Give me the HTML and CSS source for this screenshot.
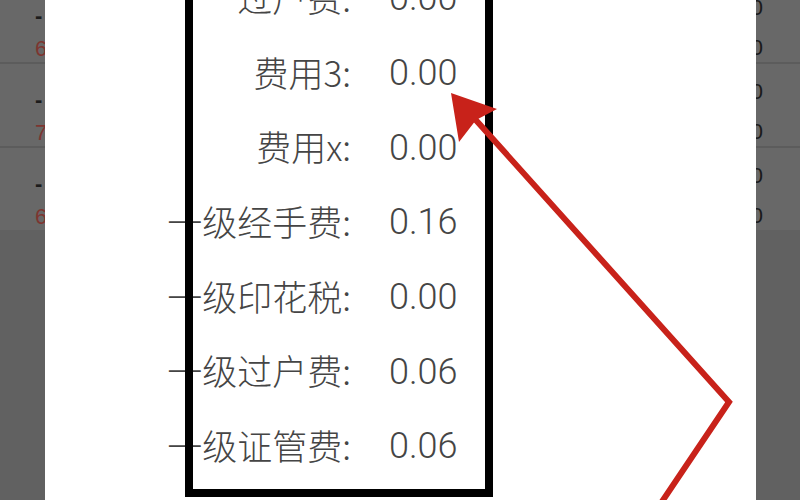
FILE: index.html
```html
<!doctype html>
<html lang="zh-CN">
    <head>
        <meta charset="UTF-8" />
        <meta name="viewport" content="width=device-width, initial-scale=1.0" />
        <title>费用明细</title>
        <link rel="stylesheet" href="styles.css">
    </head>
    <body>
        <!-- list behind the dialog, dimmed -->
        <div class="list">
            <div class="list-row">
                <div class="cell-left">
                    <span class="dash">-</span>
                    <span class="price">63.28</span>
                </div>
                <div class="cell-right">
                    <span>0.00</span>
                    <span>0.00</span>
                </div>
            </div>
            <div class="list-row">
                <div class="cell-left">
                    <span class="dash">-</span>
                    <span class="price">71.05</span>
                </div>
                <div class="cell-right">
                    <span>0.00</span>
                    <span>0.00</span>
                </div>
            </div>
            <div class="list-row">
                <div class="cell-left">
                    <span class="dash">-</span>
                    <span class="price">62.90</span>
                </div>
                <div class="cell-right">
                    <span>0.00</span>
                    <span>0.00</span>
                </div>
            </div>
        </div>

        <div class="dialog">
            <div class="fees">
                <div class="fee-label">过户费:</div>
                <div class="fee-value">0.00</div>
                <div class="fee-label">费用3:</div>
                <div class="fee-value">0.00</div>
                <div class="fee-label">费用x:</div>
                <div class="fee-value">0.00</div>
                <div class="fee-label">一级经手费:</div>
                <div class="fee-value">0.16</div>
                <div class="fee-label">一级印花税:</div>
                <div class="fee-value">0.00</div>
                <div class="fee-label">一级过户费:</div>
                <div class="fee-value">0.06</div>
                <div class="fee-label">一级证管费:</div>
                <div class="fee-value">0.06</div>
            </div>
            <div class="frame"></div>
        </div>

        <svg class="arrow" width="800" height="500" viewBox="0 0 800 500">
            <polyline points="474,118 729,402 655,512" fill="none" stroke="#c8221a" stroke-width="6" stroke-linejoin="miter" />
            <polygon points="451,93 497,109 476,120 459,142" fill="#c8221a" />
        </svg>
    </body>
</html>
```

FILE: styles.css
```css
body {
    margin: 0;
    width: 800px;
    height: 500px;
    position: relative;
    overflow: hidden;
    background-color: #616161;
    font-family: "Noto Sans CJK SC", sans-serif;
}
.list {
    margin-top: -20px;
    background-color: #686868;
}
.list-row {
    height: 82px;
    border-bottom: 2px solid #5c5c5c;
    display: flex;
    justify-content: space-between;
}
.list-row:last-child {
    border-bottom: none;
}
.cell-left,
.cell-right {
    display: flex;
    flex-direction: column;
    font-family: "Liberation Sans", sans-serif;
    font-size: 22px;
}
.cell-left {
    padding: 24px 0 0 35px;
    gap: 8px;
}
.cell-left .dash {
    color: #1c1c1c;
    font-weight: bold;
    line-height: 24px;
}
.cell-left .price {
    color: #7e3530;
    line-height: 26px;
}
.cell-right {
    padding: 16px 37px 0 0;
    gap: 16px;
    color: #1a1a1a;
    line-height: 24px;
    text-align: right;
}
.dialog {
    position: absolute;
    top: 0;
    bottom: 0;
    left: 45px;
    width: 711px;
    background-color: #ffffff;
}
.fees {
    margin-top: -41px;
    display: grid;
    grid-template-columns: 306px 1fr;
    grid-auto-rows: 74.7px;
    column-gap: 38px;
    align-items: center;
    font-size: 35px;
    font-weight: 300;
    color: #454545;
}
.fee-label {
    text-align: right;
    white-space: nowrap;
}
.fee-value {
    padding-top: 4px;
    font-family: Roboto, "Noto Sans CJK SC", sans-serif;
    font-size: 36px;
    font-weight: 300;
}
.frame {
    position: absolute;
    top: -20px;
    left: 140px;
    width: 308px;
    height: 517px;
    box-sizing: border-box;
    border: 8px solid #000000;
}
.arrow {
    position: absolute;
    top: 0;
    left: 0;
}
```
